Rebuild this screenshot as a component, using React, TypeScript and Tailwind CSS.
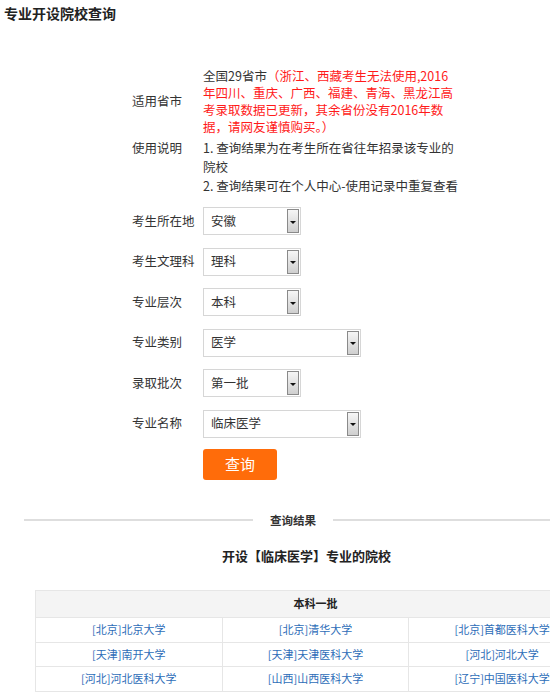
import React from "react";

const schools: string[][] = [
  ["[北京]北京大学", "[北京]清华大学", "[北京]首都医科大学"],
  ["[天津]南开大学", "[天津]天津医科大学", "[河北]河北大学"],
  ["[河北]河北医科大学", "[山西]山西医科大学", "[辽宁]中国医科大学"],
];

function FakeSelect({ value, wide }: { value: string; wide?: boolean }) {
  return (
    <div
      className={
        "flex h-[28px] items-stretch border border-[#d6d6d6] bg-white " +
        (wide ? "w-[158px]" : "w-[98px]")
      }
    >
      <span className="flex flex-1 items-center pl-[7px] text-[12.5px] text-[#333]">{value}</span>
      <span className="my-[1px] mr-[1px] flex w-[12px] items-center justify-center border border-[#8a8a8a] bg-gradient-to-b from-[#f6f6f6] to-[#cfcfcf]">
        <span className="mt-[2px] h-0 w-0 border-x-[3px] border-t-[3px] border-x-transparent border-t-[#111]" />
      </span>
    </div>
  );
}

function SelectRow({ label, value, wide }: { label: string; value: string; wide?: boolean }) {
  return (
    <div className="flex items-center">
      <span className="w-[71px] text-[12.5px]">{label}</span>
      <FakeSelect value={value} wide={wide} />
    </div>
  );
}

export default function App() {
  return (
    <div className="h-[692px] w-[550px] overflow-hidden bg-white font-['Noto_Sans_CJK_SC','Microsoft_YaHei',sans-serif] text-[#333]">
      <h1 className="pl-[4px] pt-[4px] text-[14px] font-bold leading-[18px] text-[#222]">专业开设院校查询</h1>

      {/* form */}
      <div className="mt-[45px] pl-[132px]">
        <div className="flex items-center">
          <span className="w-[71px] text-[12.5px]">适用省市</span>
          <div className="w-[270px] whitespace-nowrap text-[12.5px] leading-[17px]">
            <p>
              全国29省市<span className="text-[#ff1a1a]">（浙江、西藏考生无法使用,2016</span>
            </p>
            <p className="text-[#ff1a1a]">年四川、重庆、广西、福建、青海、黑龙江高</p>
            <p className="text-[#ff1a1a]">考录取数据已更新，其余省份没有2016年数</p>
            <p className="text-[#ff1a1a]">据，请网友谨慎购买。）</p>
          </div>
        </div>
        <div className="mt-[3px] flex items-start">
          <span className="w-[71px] text-[12.5px] leading-[19px]">使用说明</span>
          <div className="w-[262px] text-[12.5px] leading-[19px]">
            <p className="whitespace-nowrap">1. 查询结果为在考生所在省往年招录该专业的</p>
            <p>院校</p>
            <p className="whitespace-nowrap">2. 查询结果可在个人中心-使用记录中重复查看</p>
          </div>
        </div>

        <div className="mt-[12px] flex flex-col gap-[12.5px]">
          <SelectRow label="考生所在地" value="安徽" />
          <SelectRow label="考生文理科" value="理科" />
          <SelectRow label="专业层次" value="本科" />
          <SelectRow label="专业类别" value="医学" wide />
          <SelectRow label="录取批次" value="第一批" />
          <SelectRow label="专业名称" value="临床医学" wide />
        </div>

        <button className="ml-[71px] mt-[11px] flex h-[31px] w-[74px] items-center justify-center rounded-[3px] bg-[#ff6c0a] text-[15px] text-white">
          查询
        </button>
      </div>

      {/* result divider */}
      <div className="mt-[32px] flex h-[16px] items-center pl-[24px]">
        <span className="h-[2px] w-[229px] bg-[#dedede]" />
        <span className="mx-[17px] text-[11.5px] font-bold leading-[16px] text-[#333]">查询结果</span>
        <span className="h-[2px] flex-1 bg-[#dedede]" />
      </div>

      <h2 className="ml-[222px] mt-[18px] text-[13px] font-bold leading-[20px] text-[#222]">
        开设【临床医学】专业的院校
      </h2>

      <table className="ml-[35px] mt-[24px] w-[561px] min-w-[561px] table-fixed border-collapse text-[11px]">
        <thead>
          <tr className="h-[27px] bg-[#f4f4f4]">
            <th colSpan={3} className="border border-[#e6e6e6] text-[11px] font-bold text-[#222]">
              本科一批
            </th>
          </tr>
        </thead>
        <tbody>
          {schools.map((row, i) => (
            <tr key={i} className={i === 1 ? "h-[24px]" : "h-[25px]"}>
              {row.map((s) => (
                <td key={s} className="border border-[#e6e6e6] text-center text-[#2d6db8]">
                  {s}
                </td>
              ))}
            </tr>
          ))}
        </tbody>
      </table>
    </div>
  );
}
